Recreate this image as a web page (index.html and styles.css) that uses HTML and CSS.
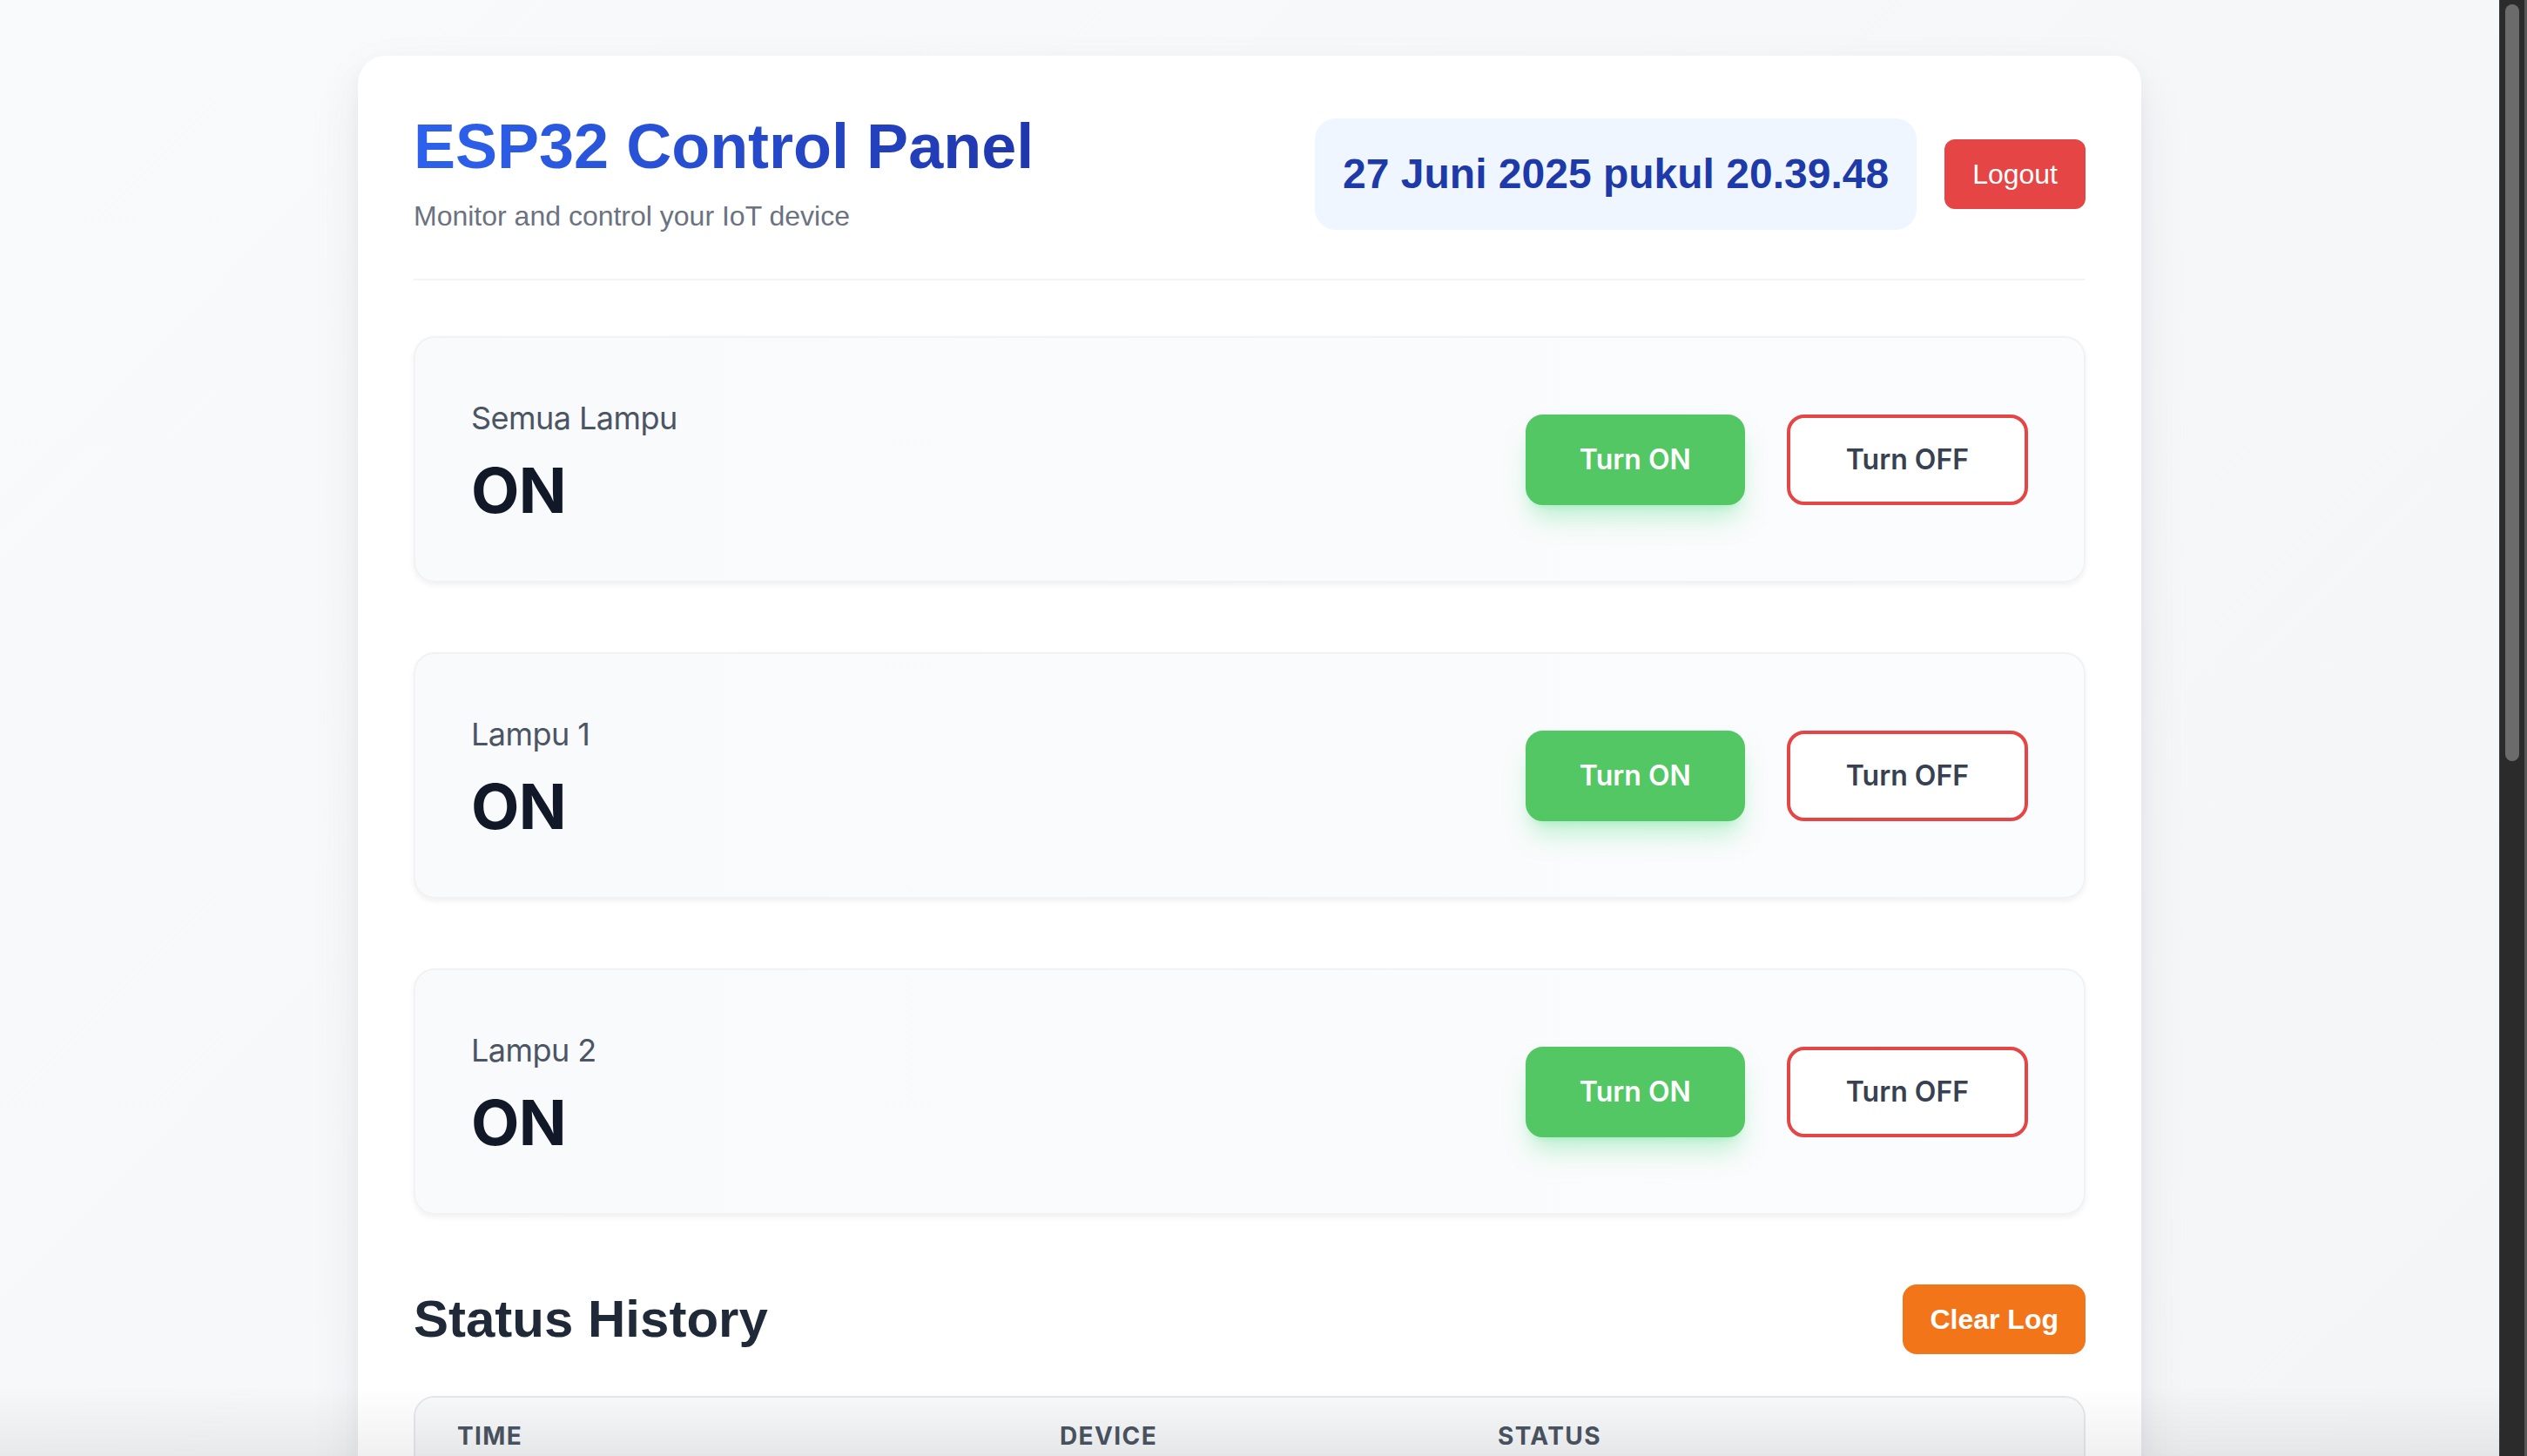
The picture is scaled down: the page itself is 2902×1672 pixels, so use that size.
FILE: index.html
```html
<!DOCTYPE html>
<html lang="id">
<head>
<meta charset="utf-8">
<title>ESP32 Control Panel</title>
<link rel="stylesheet" href="styles.css">
</head>
<body>
<div class="viewport">
  <main class="page">
    <div class="panel">
      <header class="panel-header">
        <div class="brand">
          <h1 class="title">ESP32 Control Panel</h1>
          <p class="subtitle">Monitor and control your IoT device</p>
        </div>
        <div class="header-actions">
          <div class="clock">27 Juni 2025 pukul 20.39.48</div>
          <button class="btn-logout">Logout</button>
        </div>
      </header>

      <section class="devices">
        <div class="device-card">
          <div class="device-info">
            <div class="device-name">Semua Lampu</div>
            <div class="device-state">ON</div>
          </div>
          <div class="device-actions">
            <button class="btn btn-on">Turn ON</button>
            <button class="btn btn-off">Turn OFF</button>
          </div>
        </div>
        <div class="device-card">
          <div class="device-info">
            <div class="device-name">Lampu 1</div>
            <div class="device-state">ON</div>
          </div>
          <div class="device-actions">
            <button class="btn btn-on">Turn ON</button>
            <button class="btn btn-off">Turn OFF</button>
          </div>
        </div>
        <div class="device-card">
          <div class="device-info">
            <div class="device-name">Lampu 2</div>
            <div class="device-state">ON</div>
          </div>
          <div class="device-actions">
            <button class="btn btn-on">Turn ON</button>
            <button class="btn btn-off">Turn OFF</button>
          </div>
        </div>
      </section>

      <section class="history">
        <div class="history-head">
          <h2 class="history-title">Status History</h2>
          <button class="btn-clear">Clear Log</button>
        </div>
        <div class="table-wrap">
          <table class="log-table">
            <colgroup>
              <col class="c-time">
              <col class="c-device">
              <col class="c-status">
            </colgroup>
            <thead>
              <tr><th>Time</th><th>Device</th><th>Status</th></tr>
            </thead>
          </table>
        </div>
      </section>
    </div>
  </main>
  <div class="scrollbar"><div class="thumb"></div></div>
</div>
<div class="bottom-fade"></div>
</body>
</html>
```

FILE: styles.css
```css
html, body {
  margin: 0;
  height: 1672px;
  overflow: hidden;
}

body {
  background: #f6f7f9;
  font-family: Inter, "Noto Sans", sans-serif;
}

.viewport {
  display: flex;
  height: 1672px;
}

.page {
  flex: 1;
  min-width: 0;
  padding-top: 64px;
  overflow: hidden;
  background: linear-gradient(135deg, #f9fafb 0%, #f4f5f7 100%);
}

.panel {
  width: 2048px;
  min-height: 1700px;
  margin: 0 auto;
  box-sizing: border-box;
  padding: 64px;
  background: #ffffff;
  border-radius: 32px;
  box-shadow: 0 24px 60px rgba(17, 24, 39, 0.07), 0 8px 20px rgba(17, 24, 39, 0.04);
}

/* Header */
.panel-header {
  display: flex;
  justify-content: space-between;
  align-items: center;
  padding-bottom: 48px;
  border-bottom: 2px solid #f3f4f6;
  margin-bottom: 64px;
}

.title {
  display: inline-block;
  margin: 0;
  font: 700 72px/80px "Liberation Sans", Arial, sans-serif;
  background: linear-gradient(90deg, #2d62ee 0%, #2036ad 100%);
  -webkit-background-clip: text;
  background-clip: text;
  color: transparent;
}

.subtitle {
  margin: 16px 0 0;
  font: 400 32px/48px "Liberation Sans", Arial, sans-serif;
  color: #6b7280;
}

.header-actions {
  display: flex;
  align-items: center;
  gap: 32px;
}

.clock {
  background: #eff6ff;
  border-radius: 24px;
  padding: 32px;
  font: 700 48px/64px "Liberation Sans", Arial, sans-serif;
  color: #1e3aa8;
}

.btn-logout {
  border: 0;
  border-radius: 12px;
  padding: 16px 32px;
  background: #e64545;
  color: #ffffff;
  font: 400 32px/48px "Liberation Sans", Arial, sans-serif;
}

/* Device cards */
.devices {
  display: flex;
  flex-direction: column;
  gap: 80px;
}

.device-card {
  display: flex;
  justify-content: space-between;
  align-items: center;
  padding: 64px;
  border: 2px solid #f1f2f4;
  border-radius: 24px;
  background: linear-gradient(90deg, #f9fafb 0%, #fbfcfd 100%);
  box-shadow: 0 3px 6px rgba(17, 24, 39, 0.06);
}

.device-name {
  font: 400 36px/56px Inter, sans-serif;
  letter-spacing: -0.015em;
  color: #4b5563;
}

.device-state {
  margin-top: 15px;
  font: 700 72px/80px Inter, sans-serif;
  letter-spacing: -0.01em;
  color: #111827;
}

.device-actions {
  display: flex;
  gap: 48px;
}

.btn {
  padding: 24px 58px;
  border: 4px solid transparent;
  border-radius: 20px;
  font: 600 32px/48px Inter, sans-serif;
}

.btn-on {
  background: #52c763;
  border-color: #52c763;
  color: #ffffff;
  box-shadow: 0 20px 30px -6px rgba(74, 222, 128, 0.35), 0 8px 12px -8px rgba(74, 222, 128, 0.35);
}

.btn-off {
  background: #ffffff;
  border-color: #e64545;
  color: #374151;
  padding: 24px 64px;
}

/* History */
.history {
  margin-top: 80px;
}

.history-head {
  display: flex;
  justify-content: space-between;
  align-items: center;
  margin-bottom: 48px;
}

.history-title {
  margin: 0;
  font: 700 60px/72px "Liberation Sans", Arial, sans-serif;
  color: #1f2937;
}

.btn-clear {
  border: 0;
  border-radius: 16px;
  padding: 16px 31px;
  background: #f2751a;
  color: #ffffff;
  font: 700 32px/48px "Liberation Sans", Arial, sans-serif;
}

.table-wrap {
  border: 2px solid #e5e7eb;
  border-radius: 24px 24px 0 0;
  overflow: hidden;
}

.log-table {
  width: 100%;
  border-collapse: collapse;
  table-layout: fixed;
}

.c-time { width: 692px; }
.c-device { width: 503px; }

.log-table th {
  text-align: left;
  padding: 24px 48px;
  font: 700 28px/40px Inter, sans-serif;
  letter-spacing: 0.05em;
  text-transform: uppercase;
  color: #4b5563;
  background: linear-gradient(180deg, #f9fafb 0%, #f3f4f6 100%);
}

/* Browser scrollbar */
.scrollbar {
  width: 32px;
  box-sizing: border-box;
  background: #2b2b2b;
  border-left: 1px solid #3d3d3d;
  border-right: 3px solid #575757;
  padding-top: 5px;
  display: flex;
  justify-content: center;
  align-items: flex-start;
}

.thumb {
  width: 16px;
  height: 869px;
  background: #6b6b6b;
  border-radius: 8px;
}

.bottom-fade {
  position: fixed;
  left: 0;
  right: 32px;
  bottom: 0;
  height: 80px;
  background: linear-gradient(180deg, rgba(0, 0, 0, 0) 0%, rgba(0, 0, 0, 0.06) 100%);
  pointer-events: none;
}
```
